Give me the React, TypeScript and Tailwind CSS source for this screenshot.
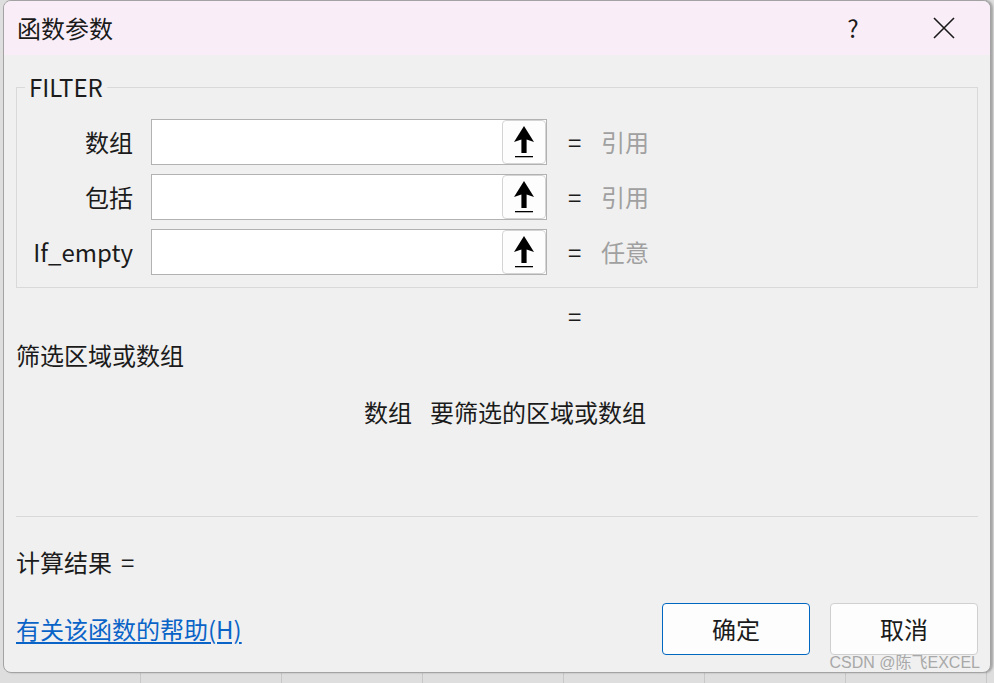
import React from "react";

const cjk = "font-['Microsoft_YaHei','Noto_Sans_CJK_SC',sans-serif]";

function RefButton() {
  return (
    <button className="h-[44px] w-[44px] shrink-0 rounded-[4px] border border-[#d4d4d4] bg-[#fdfdfd] flex items-center justify-center">
      <svg width="22" height="34" viewBox="0 0 22 34">
        <polygon points="11,1 21,17 13.6,14.6 13.6,28 8.4,28 8.4,14.6 1,17" fill="#000" />
        <rect x="2" y="31" width="18" height="1.3" fill="#000" />
      </svg>
    </button>
  );
}

function ArgRow({ label, hint }: { label: string; hint: string }) {
  return (
    <div className="flex items-center h-[46px]">
      <div className="w-[116px] text-right">{label}</div>
      <div className="ml-[18px] w-[396px] h-[46px] border border-[#b2b2b2] bg-white flex items-center justify-end">
        <RefButton />
      </div>
      <div className="ml-[21px] w-[12px]">=</div>
      <div className="ml-[21px] text-[#a0a0a0]">{hint}</div>
    </div>
  );
}

export default function App() {
  return (
    <div
      className={`w-[994px] h-[683px] overflow-hidden bg-[#dedede] bg-[repeating-linear-gradient(90deg,transparent_0px,transparent_140px,#c8c8c8_140px,#c8c8c8_141px)] pl-[3px] text-[24px] leading-[32px] text-[#1b1b1b] ${cjk}`}
    >
      <div className="relative w-[988px] h-[673px] rounded-[8px] border border-[#a3a3a3] bg-[#f0f0f0] overflow-hidden flex flex-col shadow-[2px_0_2px_rgba(0,0,0,0.25)]">
        {/* title bar */}
        <div className="h-[54px] shrink-0 bg-[#f9eef7] flex items-center pl-[13px]">
          <div className="flex-1 text-[#1a1a1a]">函数参数</div>
          <div className="w-[20px] text-center mr-[70px]">?</div>
          <svg width="22" height="22" viewBox="0 0 22 22" className="mr-[35px]">
            <path d="M1 1 L21 21 M21 1 L1 21" stroke="#1a1a1a" strokeWidth="1.6" />
          </svg>
        </div>

        {/* body */}
        <div className="flex-1 flex flex-col px-[12px] pt-[16px]">
          <fieldset className="border border-[#d9d9d9] pb-[12px]">
            <legend className="ml-[8px] px-[4px] leading-[32px]">FILTER</legend>
            <div className="flex flex-col gap-[9px] pt-[16px]">
              <ArgRow label="数组" hint="引用" />
              <ArgRow label="包括" hint="引用" />
              <ArgRow label="If_empty" hint="任意" />
            </div>
          </fieldset>

          <div className="mt-[12px] pl-[552px]">=</div>
          <div className="mt-[7px]">筛选区域或数组</div>
          <div className="mt-[25px] pl-[348px] flex gap-[18px]">
            <span>数组</span>
            <span>要筛选的区域或数组</span>
          </div>

          <div className="mt-[88px] h-px bg-[#d9d9d9]" />

          <div className="mt-[29px] flex">
            <span>计算结果</span>
            <span className="ml-[9px]">=</span>
          </div>

          <div className="mt-[25px] flex items-center">
            <a href="#" className="text-[#0a64c8] underline underline-offset-[3px]">
              有关该函数的帮助(H)
            </a>
            <div className="ml-auto flex gap-[20px]">
              <button className="w-[148px] h-[52px] rounded-[4px] border border-[#0067c0] bg-[#fdfdfd]">
                确定
              </button>
              <button className="w-[148px] h-[52px] rounded-[4px] border border-[#d0d0d0] bg-[#fdfdfd]">
                取消
              </button>
            </div>
          </div>
        </div>

        <div className="absolute right-[10px] bottom-[0px] text-[16px] leading-[18px] text-[#a8a8a8] font-['Liberation_Sans','Noto_Sans_CJK_SC',sans-serif]">
          CSDN @陈飞EXCEL
        </div>
      </div>
    </div>
  );
}
